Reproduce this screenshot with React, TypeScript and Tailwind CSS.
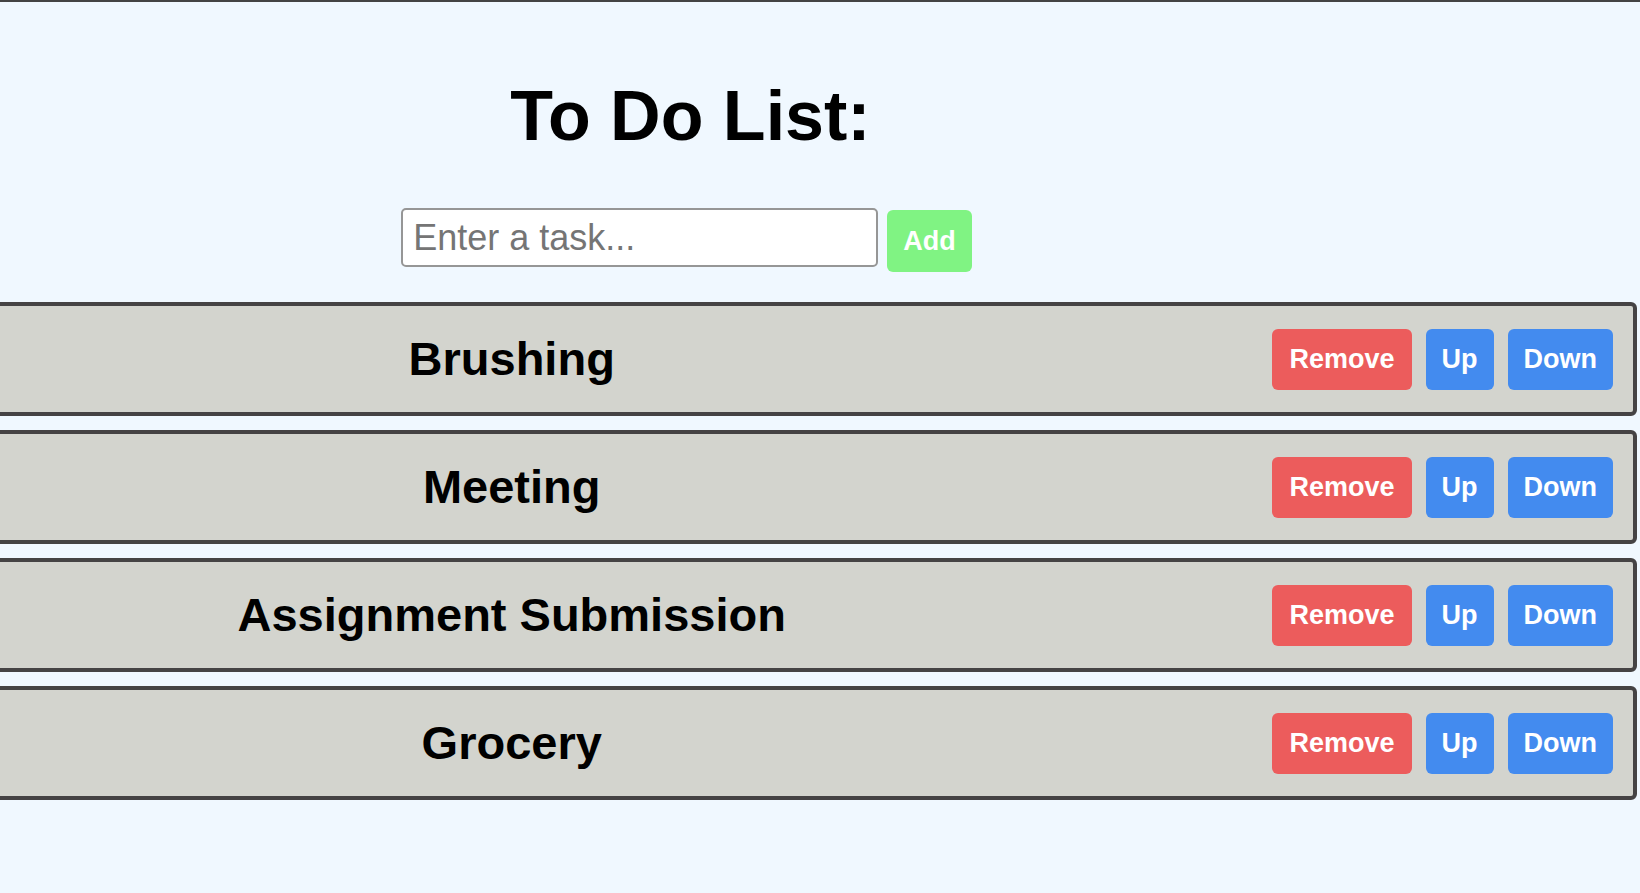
import React, { useState } from 'react';

const initialTasks = ['Brushing', 'Meeting', 'Assignment Submission', 'Grocery'];

export default function App() {
  const [tasks, setTasks] = useState<string[]>(initialTasks);
  const [newTask, setNewTask] = useState('');

  const addTask = () => {
    if (newTask.trim() === '') return;
    setTasks([...tasks, newTask.trim()]);
    setNewTask('');
  };

  const removeTask = (index: number) => {
    setTasks(tasks.filter((_, i) => i !== index));
  };

  const moveUp = (index: number) => {
    if (index === 0) return;
    const updated = [...tasks];
    [updated[index], updated[index - 1]] = [updated[index - 1], updated[index]];
    setTasks(updated);
  };

  const moveDown = (index: number) => {
    if (index === tasks.length - 1) return;
    const updated = [...tasks];
    [updated[index], updated[index + 1]] = [updated[index + 1], updated[index]];
    setTasks(updated);
  };

  return (
    <div
      className="min-h-screen bg-[#f0f8ff] border-t-2 border-[#444] overflow-hidden"
      style={{ fontFamily: '"Liberation Sans", Arial, sans-serif' }}
    >
      <div className="ml-[-263px] w-[1900px] flex flex-col items-center">
        <h1 className="mt-[74px] ml-[7px] text-[70px] leading-[80px] font-bold text-black">To Do List:</h1>

        <div className="mt-[52px] mr-[1px] flex items-baseline gap-[9px]">
          <input
            type="text"
            placeholder="Enter a task..."
            value={newTask}
            onChange={(e) => setNewTask(e.target.value)}
            className="w-[477px] bg-white border-2 border-[#969696] rounded-[5px] px-[10px] py-[7px] text-[36px] leading-[41px] text-black placeholder:text-[#757575] outline-none"
          />
          <button
            onClick={addTask}
            className="bg-[#80f383] text-white font-bold text-[27px] leading-[32px] px-[16px] py-[15px] rounded-[6px]"
          >
            Add
          </button>
        </div>

        <ol className="mt-[30px] w-full flex flex-col gap-[14px]">
          {tasks.map((task, index) => (
            <li
              key={index}
              className="h-[114px] flex items-center gap-[10px] bg-[#d3d4ce] border-4 border-[#454344] rounded-[6px] px-[20px]"
            >
              <span className="flex-1 text-center text-[47px] font-bold text-black">{task}</span>
              <div className="flex gap-[14px]">
                <button
                  onClick={() => removeTask(index)}
                  className="bg-[#ec5c5c] text-white font-bold text-[27px] leading-[31px] px-[17px] py-[15px] rounded-[6px]"
                >
                  Remove
                </button>
                <button
                  onClick={() => moveUp(index)}
                  className="bg-[#438bef] text-white font-bold text-[27px] leading-[31px] px-[16px] py-[15px] rounded-[6px]"
                >
                  Up
                </button>
                <button
                  onClick={() => moveDown(index)}
                  className="bg-[#438bef] text-white font-bold text-[27px] leading-[31px] px-[16px] py-[15px] rounded-[6px]"
                >
                  Down
                </button>
              </div>
            </li>
          ))}
        </ol>
      </div>
    </div>
  );
}
